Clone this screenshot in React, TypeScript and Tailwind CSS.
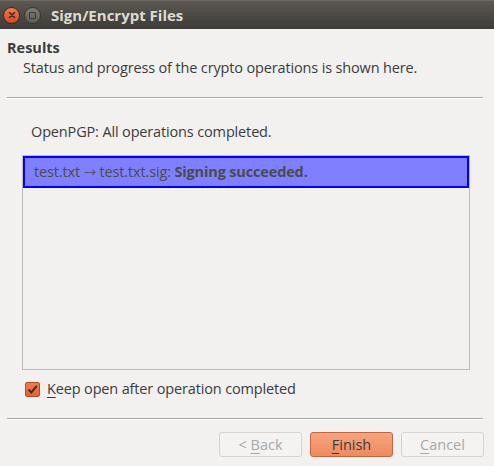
import React from "react";

function TitleBar() {
  return (
    <div className="h-[29px] flex items-center bg-gradient-to-b from-[#5c5952] to-[#3c3b37] border-t border-[#6e6a62]">
      <div className="ml-[3px] w-[17px] h-[17px] rounded-full bg-gradient-to-b from-[#f07b52] to-[#d9481e] border border-[#3a2a22] flex items-center justify-center">
        <svg width="8" height="8" viewBox="0 0 8 8">
          <path d="M1.5 1.5 L6.5 6.5 M6.5 1.5 L1.5 6.5" stroke="#3b2a22" strokeWidth="1.6" strokeLinecap="round" />
        </svg>
      </div>
      <div className="ml-[4px] w-[17px] h-[17px] rounded-full bg-gradient-to-b from-[#807c74] to-[#5f5b55] border border-[#34332f] flex items-center justify-center">
        <div className="w-[7px] h-[7px] border-[1.5px] border-[#3a3935] rounded-[1px]" />
      </div>
      <span className="ml-[10px] text-[15px] font-bold text-[#dfdbd2]">Sign/Encrypt Files</span>
    </div>
  );
}

function Btn({ label, mn, primary }: { label: string; mn: number; primary?: boolean }) {
  const before = label.slice(0, mn);
  const key = label[mn];
  const after = label.slice(mn + 1);
  return (
    <div
      className={
        "w-[83px] h-[25px] rounded-[3px] flex items-center justify-center text-[14.5px] border " +
        (primary
          ? "bg-gradient-to-b from-[#f7a47e] to-[#ee8a5f] border-[#c4653f] text-[#3c3c3c]"
          : "bg-[#f4f3f2] border-[#d6d4d1] text-[#a9a8a6]")
      }
    >
      <span>
        {before}
        <span className="underline underline-offset-[3px]">{key}</span>
        {after}
      </span>
    </div>
  );
}

export default function App() {
  return (
    <div
      className="w-[494px] h-[466px] bg-[#f2f1f0] text-[#3c3c3c] flex flex-col overflow-hidden"
      style={{ fontFamily: '"Open Sans", "Noto Sans", sans-serif' }}
    >
      <TitleBar />
      <div className="pl-[7px] pt-[9px]">
        <div className="text-[14.5px] font-bold leading-[20px]">Results</div>
        <div className="pl-[16px] text-[14.5px] leading-[20px] tracking-[-0.15px]">
          Status and progress of the crypto operations is shown here.
        </div>
      </div>
      <div className="mt-[19px] mx-[7px] mr-[11px] h-[2px] border-t border-[#a9a8a6] border-b border-b-white" />

      <div className="mt-[23px] pl-[31px] text-[14.5px] leading-[20px] tracking-[-0.15px]">
        OpenPGP: All operations completed.
      </div>

      <div className="mt-[13px] mx-[22px] mr-[24px] h-[215px] border border-[#bcbbb9] bg-[#f2f1f0]">
        <div className="h-[32px] bg-[#8080ff] border-2 border-[#0000ff] flex items-center pl-[9px] text-[14.5px] text-[#4a4a50] tracking-[-0.15px] whitespace-pre">
          <span>test.txt </span>
          <span className="text-[15px] leading-[20px] font-light" style={{ fontFamily: '"DejaVu Sans", sans-serif' }}>→</span>
          <span> test.txt.sig: </span>
          <span className="font-bold">Signing succeeded.</span>
        </div>
      </div>

      <div className="mt-[9px] ml-[25px] flex items-center gap-[7px]">
        <div className="w-[15px] h-[15px] rounded-[2px] bg-gradient-to-b from-[#ef7c50] to-[#de6436] border border-[#b24c28] flex items-center justify-center">
          <svg width="11" height="11" viewBox="0 0 11 11">
            <path d="M1.5 5.5 L4.3 8.5 L9.8 1.8" fill="none" stroke="#4a2b1d" strokeWidth="2" />
          </svg>
        </div>
        <span className="text-[14.5px] leading-[20px] tracking-[-0.15px]">
          <span className="underline underline-offset-[3px]">K</span>eep open after operation completed
        </span>
      </div>

      <div className="mt-[19px] mx-[7px] mr-[11px] h-[2px] border-t border-[#a9a8a6] border-b border-b-white" />

      <div className="mt-[12px] flex justify-end gap-[8px] pr-[10px]">
        <Btn label="< Back" mn={2} />
        <Btn label="Finish" mn={0} primary />
        <Btn label="Cancel" mn={0} />
      </div>
    </div>
  );
}
